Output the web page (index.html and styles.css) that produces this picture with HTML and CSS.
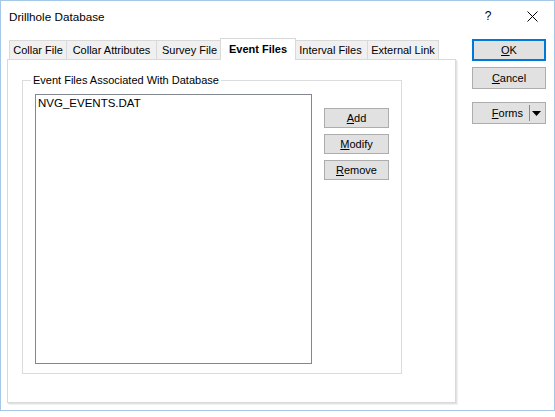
FILE: index.html
```html
<!DOCTYPE html>
<html lang="en">
<head>
<meta charset="utf-8">
<title>Drillhole Database</title>
<link rel="stylesheet" href="styles.css">
</head>
<body>
<div class="window">
  <div class="titlebar">
    <span class="title">Drillhole Database</span>
    <span class="caption-btn help">?</span>
    <span class="caption-btn close">
      <svg width="11" height="11" viewBox="0 0 11 11"><path d="M0.5 0.5L10.5 10.5M10.5 0.5L0.5 10.5" stroke="#000" stroke-width="1" fill="none"/></svg>
    </span>
  </div>
  <div class="main">
    <div class="tabs-col">
      <div class="tabstrip">
        <div class="tab w-collar">Collar File</div>
        <div class="tab w-attr">Collar Attributes</div>
        <div class="tab w-survey">Survey File</div>
        <div class="tab active w-event">Event Files</div>
        <div class="tab w-interval">Interval Files</div>
        <div class="tab w-external">External Link</div>
      </div>
      <div class="panel">
        <fieldset class="group">
          <legend>Event Files Associated With Database</legend>
          <div class="group-body">
            <div class="list">
              <div class="item">NVG_EVENTS.DAT</div>
            </div>
            <div class="actions">
              <button class="btn"><u>A</u>dd</button>
              <button class="btn"><u>M</u>odify</button>
              <button class="btn"><u>R</u>emove</button>
            </div>
          </div>
        </fieldset>
      </div>
    </div>
    <div class="side">
      <button class="btn btn-side btn-default"><u>O</u>K</button>
      <button class="btn btn-side btn-cancel"><u>C</u>ancel</button>
      <button class="btn btn-side btn-forms">
        <span class="forms-label"><u>F</u>orms</span>
        <span class="forms-sep"></span>
        <svg class="forms-arrow" width="9" height="5" viewBox="0 0 9 5"><path d="M0 0H9L4.5 5Z" fill="#000"/></svg>
      </button>
    </div>
  </div>
</div>
</body>
</html>
```
FILE: styles.css
```css
* { box-sizing: border-box; }

body {
  margin: 0;
  background: #fff;
  font-family: "Liberation Sans", Arial, sans-serif;
  font-size: 11px;
  color: #000;
}

.window {
  width: 555px;
  height: 411px;
  border: 1px solid #a5c8e9;
  background: #fff;
}

.titlebar {
  height: 30px;
  display: flex;
  align-items: center;
  padding-left: 8px;
}

.title {
  flex: 1;
  font-size: 11.7px;
  margin-top: 1px;
}

.caption-btn {
  height: 30px;
  display: flex;
  align-items: center;
  justify-content: center;
}

.help {
  width: 46px;
  font-size: 12px;
}

.close {
  width: 43px;
}

.main {
  display: flex;
  gap: 14px;
  padding: 7px 0 0 6px;
}

.tabs-col {
  width: 451px;
}

.tabstrip {
  display: flex;
  align-items: flex-end;
  height: 22px;
  margin-bottom: -1px;
  padding-left: 2px;
}

.tab {
  flex: none;
  height: 19px;
  margin-bottom: 1px;
  margin-left: -1px;
  border: 1px solid #d9d9d9;
  border-bottom: none;
  background: #f0f0f0;
  display: flex;
  align-items: center;
  justify-content: center;
  white-space: nowrap;
}

.tab:first-child { margin-left: 0; }

.tab.active {
  height: 22px;
  margin-bottom: 0;
  margin-left: -3px;
  margin-right: -2px;
  background: #fff;
  font-weight: bold;
  position: relative;
  z-index: 1;
  padding-bottom: 2px;
}

.w-collar { width: 58px; }
.w-attr { width: 91px; }
.w-survey { width: 67px; }
.w-event { width: 76px; }
.w-interval { width: 75px; }
.w-external { width: 72px; }

.panel {
  width: 449px;
  height: 344px;
  border: 1px solid #d9d9d9;
  box-shadow: 1px 1px 0 #e3e3e3, 2px 2px 0 #f0f0f0;
  background: #fff;
  padding: 14px 0 0 14px;
}

.group {
  margin: 0;
  width: 380px;
  border: 1px solid #dcdcdc;
  padding: 7px 12px 9px 12px;
}

.group legend {
  margin-left: -4px;
  padding: 0 2px;
  line-height: 13px;
}

.group-body {
  display: flex;
  align-items: flex-start;
  gap: 12px;
}

.list {
  width: 277px;
  height: 270px;
  border: 1px solid #828790;
  background: #fff;
  padding: 1px 1px;
}

.item {
  line-height: 13px;
  padding: 1px 1px;
  font-size: 11.5px;
}

.actions {
  display: flex;
  flex-direction: column;
  gap: 6px;
  margin-top: 14px;
}

.btn {
  width: 65px;
  height: 20px;
  padding: 0;
  margin: 0;
  border: 1px solid #adadad;
  background: #e1e1e1;
  font: inherit;
  color: #000;
  display: flex;
  align-items: center;
  justify-content: center;
}

.side {
  width: 74px;
  display: flex;
  flex-direction: column;
  margin-top: 1px;
}

.btn-side {
  width: 74px;
  height: 22px;
}

.btn-default {
  border: 2px solid #0078d7;
}

.btn-cancel {
  margin-top: 6px;
}

.btn-forms {
  margin-top: 13px;
  justify-content: flex-end;
}

.forms-sep {
  width: 1px;
  height: 16px;
  background: #8a8a8a;
  margin: 0 2px 0 6px;
}

.forms-arrow {
  margin-right: 4px;
}
```
